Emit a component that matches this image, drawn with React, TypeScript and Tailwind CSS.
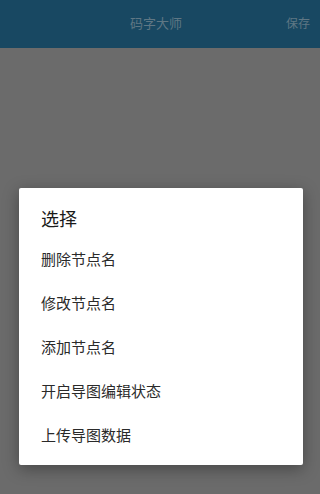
const ITEMS = ['删除节点名', '修改节点名', '添加节点名', '开启导图编辑状态', '上传导图数据'];

export default function App() {
  return (
    <div
      className="w-[320px] h-[494px] flex flex-col bg-[#6b6b6b] overflow-hidden"
      style={{ fontFamily: '"Noto Sans CJK SC", "Noto Sans", sans-serif' }}
    >
      {/* Header (dimmed by dialog overlay) */}
      <div className="h-[48px] shrink-0 bg-[#184862] flex items-center relative pb-[2px]">
        <div className="flex-1 text-center text-[13px] text-[#5f7784] pr-[8px]">码字大师</div>
        <div className="absolute right-[10px] top-0 h-full flex items-center pb-[2px] text-[12px] text-[#5f7784]">保存</div>
      </div>

      {/* Overlay area */}
      <div className="flex-1 flex flex-col">
        <div className="h-[140px]" />
        <div className="ml-[19px] w-[284px] bg-white rounded-[2px] shadow-[0_4px_16px_rgba(0,0,0,0.35)] pb-[7px]">
          <div className="pt-[20px] pb-[10px] px-[22px] text-[18px] leading-[20px] text-[#1a1a1a]">选择</div>
          {ITEMS.map((item) => (
            <div key={item} className="h-[44px] flex items-center px-[22px] pb-[1px] text-[15px] text-[#2a2a2a]">
              {item}
            </div>
          ))}
        </div>
      </div>
    </div>
  );
}
